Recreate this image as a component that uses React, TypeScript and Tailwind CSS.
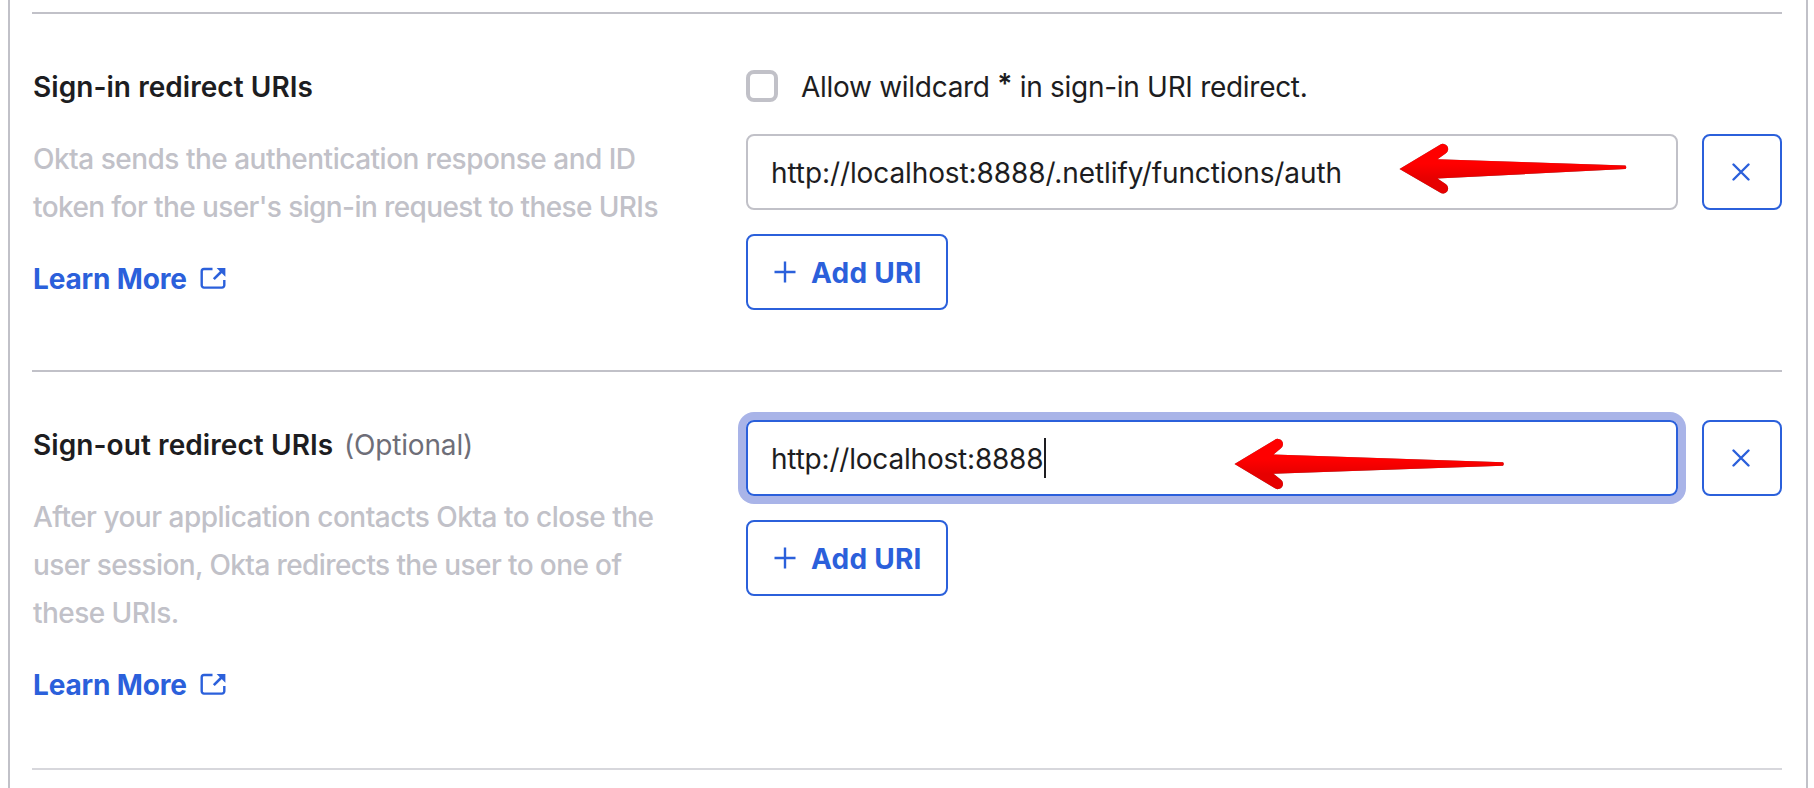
import React from 'react';

function ExternalIcon() {
  return (
    <svg width="26" height="22" viewBox="0 0 26 22" fill="none" className="mb-[2px] shrink-0">
      <path d="M12.5 2H4A2.3 2.3 0 0 0 1.7 4.3v14A2.3 2.3 0 0 0 4 20.6h18a2.3 2.3 0 0 0 2.3-2.3V13" stroke="#2b60db" strokeWidth="2.4" />
      <path d="M13.8 12.2 22 4" stroke="#2b60db" strokeWidth="2.6" />
      <path d="M16.6 0.9H25.4V9.7Z" fill="#2b60db" />
    </svg>
  );
}

function LearnMore() {
  return (
    <a href="#" className="mt-6 flex h-12 items-center font-bold text-[#2b60db]">
      <span className="w-[167px] tracking-[-0.15px]">Learn More</span>
      <ExternalIcon />
    </a>
  );
}

function RemoveButton() {
  return (
    <button aria-label="Remove" className="flex h-[76px] w-20 shrink-0 items-center justify-center rounded-[8px] border-2 border-[#2b60db] bg-white pr-[2px]">
      <svg width="18" height="18" viewBox="0 0 18 18" fill="none" stroke="#2b60db" strokeWidth="2.4" strokeLinecap="round">
        <path d="M1.5 1.5 16.5 16.5M16.5 1.5 1.5 16.5" />
      </svg>
    </button>
  );
}

function AddButton() {
  return (
    <button className="mt-6 flex h-[76px] w-[202px] items-center rounded-[8px] border-2 border-[#2b60db] bg-white pl-[26px] font-bold text-[#2b60db]">
      <svg width="22" height="22" viewBox="0 0 22 22" fill="none" stroke="#2b60db" strokeWidth="2.4" className="mr-[15px]">
        <path d="M11 0.5V21.5M0.5 11H21.5" />
      </svg>
      <span className="pt-px tracking-[0.25px]">Add URI</span>
    </button>
  );
}

function Arrow({ d, id, className }: { d: string; id: string; className: string }) {
  return (
    <svg viewBox="0 0 290 60" width="290" height="60" className={className}>
      <defs>
        <linearGradient id={id} x1="0" y1="0" x2="0" y2="1">
          <stop offset="0.4" stopColor="#ff0000" />
          <stop offset="0.7" stopColor="#e60000" />
        </linearGradient>
      </defs>
      <path d={d} fill={`url(#${id})`} className="drop-shadow-[0_0.5px_0.5px_rgba(0,0,0,0.5)]" />
    </svg>
  );
}

export default function App() {
  return (
    <div className="h-[788px] w-[1814px] overflow-hidden bg-white pl-2 pr-[6px] font-['Inter',sans-serif] text-[28px] leading-[48px] text-[#1d1d21]">
      <div className="h-full border-x-2 border-[#c1c1c8] pl-[22px] pr-6 pt-3">
        <section className="flex h-[358px] border-t-2 border-[#c1c1c8] pt-12">
          <div className="w-[714px] shrink-0 whitespace-nowrap pl-[1px] pt-px">
            <h3 className="font-semibold tracking-[0.05px]">Sign-in redirect URIs</h3>
            <p className="mt-6 font-[450] text-[#c1c1c8]">
              <span className="block tracking-[-0.5px]">Okta sends the authentication response and ID</span>
              <span className="block tracking-[-0.6px]">token for the user's sign-in request to these URIs</span>
            </p>
            <LearnMore />
          </div>
          <div className="w-[1036px]">
            <label className="flex h-12 items-center">
              <span className="mr-[23px] size-8 rounded-[8px] border-4 border-[#c1c1c8]" />
              <span className="whitespace-pre pt-px tracking-[-0.29px]">
                Allow wildcard <span className="relative -top-[3px] font-semibold">*</span> in sign-in URI redirect.
              </span>
            </label>
            <div className="mt-6 flex gap-6">
              <div className="relative flex h-[76px] w-[932px] items-center rounded-[8px] border-2 border-[#c1c1c8] pl-[23px]">
                <span className="pt-px tracking-[-0.1px]">http://localhost:8888/.netlify/functions/auth</span>
                <Arrow
                  id="shaft-in"
                  className="absolute left-[642px] top-[4px]"
                  d="M9.5 29 50 4.8A5 5 0 0 1 56 13.2L47.5 19.2 235.5 25.4Q237 27.2 235.5 29L47.5 38.5 56 44.3A5 5 0 0 1 50 52.6Z"
                />
              </div>
              <RemoveButton />
            </div>
            <AddButton />
          </div>
        </section>
        <section className="flex h-[400px] border-y-2 border-t-[#c1c1c8] border-b-[#d7d7dc] pt-12">
          <div className="w-[714px] shrink-0 whitespace-nowrap pl-[1px] pt-px">
            <h3 className="flex">
              <span className="w-[311px] font-semibold tracking-[0.08px]">Sign-out redirect URIs</span>
              <span className="tracking-[-0.17px] text-[#6e6e78]">(Optional)</span>
            </h3>
            <p className="mt-6 font-[450] text-[#c1c1c8]">
              <span className="block tracking-[-0.5px]">After your application contacts Okta to close the</span>
              <span className="block tracking-[-0.6px]">user session, Okta redirects the user to one of</span>
              <span className="block tracking-[-0.56px]">these URIs.</span>
            </p>
            <LearnMore />
          </div>
          <div className="w-[1036px]">
            <div className="flex gap-6">
              <div className="relative flex h-[76px] w-[932px] items-center rounded-[8px] border-2 border-[#2b60db] pl-[23px] ring-8 ring-[#a9b4e8]">
                <span className="w-[273px] pt-px tracking-[-0.2px]">http://localhost:8888</span>
                <span className="h-10 w-[2px] bg-[#1d1d21]" />
                <Arrow
                  id="shaft-out"
                  className="absolute left-[476px] top-[12px]"
                  d="M10.5 30 50.5 6A5 5 0 0 1 57 14.2L49.5 20.5 279 28.3Q280.5 30 279 31.7L49.5 39.7 57 45.8A5 5 0 0 1 50.5 54Z"
                />
              </div>
              <RemoveButton />
            </div>
            <AddButton />
          </div>
        </section>
      </div>
    </div>
  );
}
